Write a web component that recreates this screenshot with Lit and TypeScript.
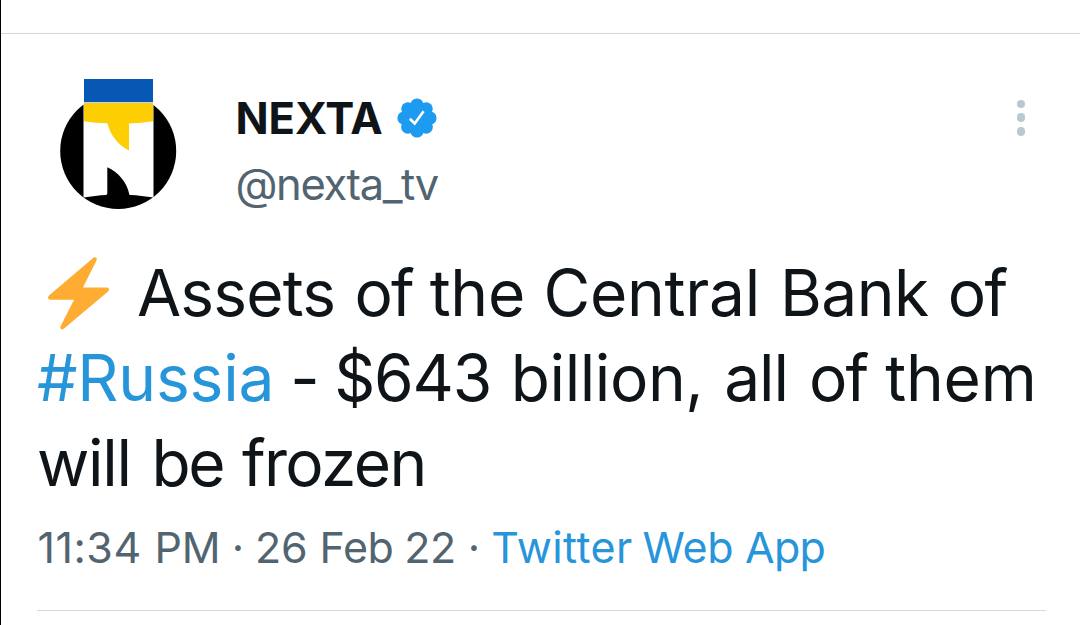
import {LitElement, html, css} from 'lit';
import {customElement, property} from 'lit/decorators.js';

interface Run {
  text: string;
  // letter spacing, px
  track: number;
  // extra width of the space after the run, px
  gap?: number;
  link?: boolean;
}

const LINES: Run[][] = [
  [
    {text: 'Assets', track: -0.8, gap: 2},
    {text: 'of', track: -1.8, gap: 0.5},
    {text: 'the', track: -0.3, gap: 1},
    {text: 'Central', track: -0.3, gap: 2.5},
    {text: 'Bank', track: -0.6, gap: 2},
    {text: 'of', track: -1.8},
  ],
  [
    {text: '#Russia', track: -0.2, gap: -1.7, link: true},
    {text: '-', track: -0.3, gap: -3},
    {text: '$643', track: -1.2, gap: 3},
    {text: 'billion,', track: -0.4, gap: 3.2},
    {text: 'all', track: -1.1, gap: 4.3},
    {text: 'of', track: -1.8, gap: 1.5},
    {text: 'them', track: -0.2},
  ],
  [
    {text: 'will', track: -1.3, gap: 4},
    {text: 'be', track: -2.3, gap: 3},
    {text: 'frozen', track: -1.7},
  ],
];

const META: Run[] = [
  {text: '11:34', track: 0.5, gap: 0.3},
  {text: 'PM ·', track: -0.4, gap: -0.5},
  {text: '26', track: -0.3, gap: 0.5},
  {text: 'Feb', track: -0.4, gap: -1},
  {text: '22 ·', track: -0.3, gap: -0.5},
  {text: 'Twitter', track: 0.4, gap: -2.6, link: true},
  {text: 'Web', track: -0.3, link: true},
  {text: 'App', track: -0.7, link: true},
];

@customElement('tweet-avatar')
export class TweetAvatar extends LitElement {
  static override styles = css`
    :host {
      display: block;
      height: 134px;
      width: 120px;
    }

    svg {
      display: block;
    }
  `;

  override render() {
    return html`
      <svg width="120" height="134" viewBox="58 77 120 134">
        <ellipse cx="118.2" cy="151" rx="58" ry="58" fill="#000" />
        <path d="M83.5 78H153.5V197.5Q118 191.5 83.5 197.5Z" fill="#fff" />
        <path d="M84 79H153V102.3H84Z" fill="#0757b5" />
        <path
          d="M84 103H153V121.3Q141 123.3 129 123.6V150.5C118.5 145.5 110 135 107.5 123.3Q95 123.3 84 121.3Z"
          fill="#fdce02"
        />
        <path
          d="M107.3 167.2C118 172 127.5 182.5 129.3 194.5L132 199H104L107.3 193.5Z"
          fill="#000"
        />
      </svg>
    `;
  }
}

@customElement('tweet-header')
export class TweetHeader extends LitElement {
  @property({type: String}) name = '';
  @property({type: String}) handle = '';

  static override styles = css`
    :host {
      display: flex;
      align-items: flex-start;
    }

    .names {
      flex: 1;
      font-size: 43.5px;
      line-height: 66px;
      padding: 8px 0 0 57.5px;
    }

    .name {
      align-items: center;
      color: #0f1419;
      display: flex;
      font-weight: 700;
      gap: 14px;
      height: 66px;
    }

    .name span {
      letter-spacing: -0.1px;
    }

    .handle {
      color: #536471;
      letter-spacing: -1.4px;
    }

    .more {
      display: flex;
      flex-direction: column;
      gap: 5.6px;
      padding: 22.5px 21px 0 0;
    }

    .more i {
      background: #b9c9d2;
      border-radius: 50%;
      height: 8.4px;
      width: 8.4px;
    }
  `;

  override render() {
    return html`
      <tweet-avatar></tweet-avatar>
      <div class="names">
        <div class="name">
          <span>${this.name}</span>
          <svg width="40" height="40" viewBox="-20 -20 40 40">
            <g fill="#1d9bf0">
              <circle r="16" />
              <circle cx="0" cy="-13" r="6.6" />
              <circle cx="9.2" cy="-9.2" r="6.6" />
              <circle cx="13" cy="0" r="6.6" />
              <circle cx="9.2" cy="9.2" r="6.6" />
              <circle cx="0" cy="13" r="6.6" />
              <circle cx="-9.2" cy="9.2" r="6.6" />
              <circle cx="-13" cy="0" r="6.6" />
              <circle cx="-9.2" cy="-9.2" r="6.6" />
            </g>
            <path
              d="M-7.2 .8L-2.3 5.5L6.6 -6.8"
              fill="none"
              stroke="#fff"
              stroke-width="2.6"
            />
          </svg>
        </div>
        <div class="handle">${this.handle}</div>
      </div>
      <div class="more"><i></i><i></i><i></i></div>
    `;
  }
}

@customElement('app-root')
export class AppRoot extends LitElement {
  static override styles = css`
    :host {
      background: #fff;
      border-left: 1px solid #000;
      box-sizing: border-box;
      display: block;
      font-family: Inter, 'Liberation Sans', sans-serif;
      height: 625px;
      overflow: hidden;
      width: 1080px;
    }

    .top {
      border-bottom: 1px solid #d3d7de;
      height: 33px;
    }

    .tweet {
      border-bottom: 1px solid #d3d9dd;
      box-sizing: border-box;
      height: 577px;
      margin: 0 34px 0 36px;
      padding-top: 43px;
    }

    tweet-header {
      height: 134px;
      margin-left: 21px;
    }

    .text {
      color: #0f1419;
      font-size: 64px;
      line-height: 85px;
      margin-top: 39px;
    }

    .line {
      display: flex;
      height: 85px;
      white-space: pre;
    }

    .bolt {
      flex: none;
      margin: 6px 27px 0 10px;
    }

    .link {
      color: #2795d9;
    }

    .meta {
      color: #536471;
      display: flex;
      font-size: 43px;
      line-height: 60px;
      margin-top: 12px;
      padding-left: 0.5px;
      white-space: pre;
    }
  `;

  private renderRun(run: Run) {
    const style = `letter-spacing: ${run.track}px; margin-right: ${run.gap ?? 0}px`;
    return html`<span class=${run.link ? 'link' : ''} style=${style}>${run.text} </span>`;
  }

  private renderBolt() {
    return html`
      <svg class="bolt" width="63" height="74" viewBox="47 256 63 74">
        <path
          d="M94 257.3Q97.8 256.5 96.5 260.5L83 287.5H107Q110.8 288.5 107.8 291.8L63.5 329Q60 330.8 60.4 326.8L74 299.7H50Q46.5 298.5 49 295.5Z"
          fill="#ffac33"
        />
      </svg>
    `;
  }

  override render() {
    return html`
      <div class="top"></div>
      <div class="tweet">
        <tweet-header name="NEXTA" handle="@nexta_tv"></tweet-header>
        <div class="text">
          ${LINES.map(
            (line, i) =>
              html`<div class="line">${i === 0 ? this.renderBolt() : ''}${line.map(this.renderRun)}</div>`
          )}
        </div>
        <div class="meta">${META.map(this.renderRun)}</div>
      </div>
    `;
  }
}
